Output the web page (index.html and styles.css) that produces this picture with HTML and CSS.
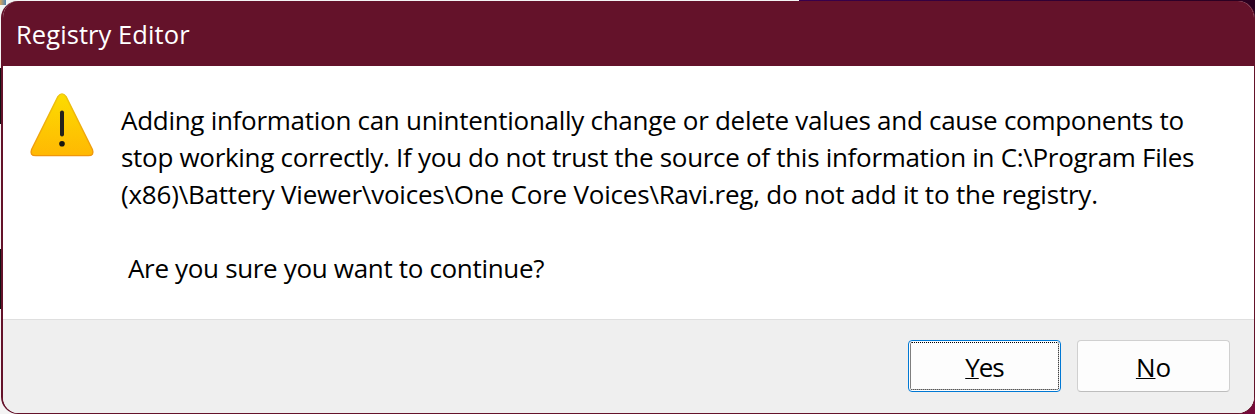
FILE: index.html
```
<!DOCTYPE html>
<html lang="en">
<head>
<meta charset="utf-8">
<title>Registry Editor</title>
<link rel="stylesheet" href="styles.css">
</head>
<body>
<div class="desktop">
  <main class="dialog">
    <header class="titlebar"><span class="title">Registry Editor</span></header>
    <section class="content">
      <svg class="warning" width="66" height="66" viewBox="0 0 66 66">
        <defs>
          <linearGradient id="fill" x1="0" y1="0" x2="0" y2="1"><stop offset="0" stop-color="#fcdc00"/><stop offset="1" stop-color="#ffb803"/></linearGradient>
          <linearGradient id="edge" x1="0" y1="0" x2="0" y2="1"><stop offset="0" stop-color="#ecc50c"/><stop offset="1" stop-color="#f0960c"/></linearGradient>
        </defs>
        <path d="M28.9 4.6Q33-.8 37.1 4.6L63.4 57.4Q65.6 63.6 59.3 63.6H6.7Q.4 63.6 2.6 57.4Z" fill="url(#fill)" stroke="url(#edge)" stroke-width="1.4"/>
        <path d="M33 20.5V42.5" stroke="#24221c" stroke-width="4" stroke-linecap="round"/>
        <circle cx="33" cy="51.8" r="2.8" fill="#171510"/>
      </svg>
      <div class="message">
        <p class="line line-one"><span>Adding information can unintentionally change or delete values and cause components to</span></p>
        <p class="line line-two"><span>stop working correctly. If you do not trust the source of this information in C:\Program Files</span></p>
        <p class="line line-three"><span>(x86)\Battery Viewer\voices\One Core Voices\Ravi.reg, do not add it to the registry.</span></p>
        <p class="line question"><span>Are you sure you want to continue?</span></p>
      </div>
    </section>
    <footer class="actions">
      <button class="button button-default"><span class="label label-yes"><span class="key">Y</span>es</span></button>
      <button class="button"><span class="label"><span class="key">N</span>o</span></button>
    </footer>
  </main>
</div>
</body>
</html>
```
FILE: styles.css
```
* { box-sizing: border-box; }
body { margin: 0; font-family: "Open Sans", "Noto Sans", sans-serif; color: #000; }
.desktop {
  width: 1255px; height: 414px; padding: 1px 0 0 1px; overflow: hidden;
  background:
    linear-gradient(#75093a, #75093a) 1235px 394px / 20px 20px no-repeat,
    linear-gradient(#2b001f, #2b001f) 1235px 1px / 20px 300px no-repeat,
    linear-gradient(90deg, #39004d, #2b001f) 799px 0 / 456px 1px no-repeat,
    linear-gradient(#111, #111) 0 68px / 1px 56px no-repeat,
    linear-gradient(#111, #111) 0 249px / 1px 60px no-repeat,
    linear-gradient(90deg, #d9a45a, #4c83b5) 0 0 / 6px 5px no-repeat,
    #f4f4f4;
}
.dialog {
  display: flex; flex-direction: column; width: 1254px; height: 413px;
  border: solid #64122a; border-width: 0 1px 1px 2px;
  border-radius: 17px; overflow: hidden; background: #fff;
}
.titlebar { height: 65px; flex: none; padding: 15px 13px; background: #64122a; color: #fff; font-size: 25.5px; line-height: 36px; }
.title { white-space: nowrap; letter-spacing: .08px; }
.content { display: flex; flex: 1; gap: 26px; padding: 26px 0 0 26px; }
.warning { flex: none; }
.message { padding-top: 10px; font-size: 26px; line-height: 37px; letter-spacing: -.3px; }
.line { margin: 0; white-space: nowrap; }
.line-one { letter-spacing: -.28px; }
.line-three { letter-spacing: -.21px; }
.question { margin-top: 37px; padding-left: 7px; letter-spacing: -.33px; }
.actions { display: flex; justify-content: flex-end; gap: 16px; height: 94px; padding: 20px 24px 0 0; border-top: 1px solid #dfdfdf; background: #efefef; }
.button { width: 153px; height: 52px; padding: 0; border: 1px solid #d0d0d0; border-bottom-color: #bdbdbd; border-radius: 4px; background: #fdfdfd; font: 26px/36px "Open Sans", "Noto Sans", sans-serif; color: #000; }
.button-default { border-color: #0078d4; outline: 1px dotted #000; outline-offset: -3px; }
.label { display: block; padding-top: 1px; }
.label-yes { letter-spacing: -1px; }
.key { text-decoration: underline; text-decoration-thickness: 1px; text-underline-offset: 1px; text-decoration-skip-ink: none; }
```
